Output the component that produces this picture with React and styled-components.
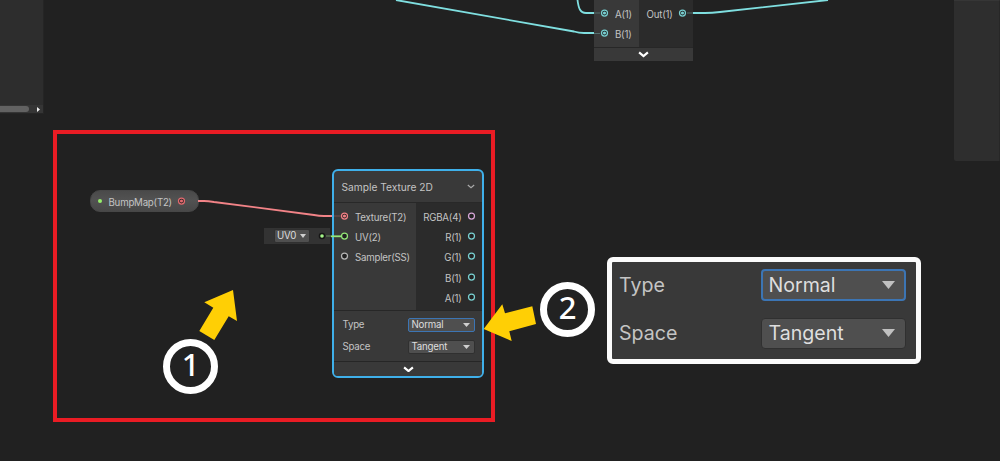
import React from 'react';
import styled, { createGlobalStyle } from 'styled-components';

const Global = createGlobalStyle`
  body { margin: 0; background: #212121; }
  * { box-sizing: border-box; }
`;

const Canvas = styled.main`
  position: relative;
  width: 1000px;
  height: 461px;
  overflow: hidden;
  background: #212121;
  color: #c4c4c4;
  font: 9.7px/20px Inter, sans-serif;
  letter-spacing: -0.22px;
  white-space: nowrap;
`;

const Placed = styled.div`
  position: absolute;
  left: ${p => p.$x}px;
  top: ${p => p.$y}px;
`;

const Overlay = styled.svg`
  position: absolute;
  inset: 0;
  pointer-events: none;
`;

const Blackboard = styled(Placed)`
  display: flex;
  flex-direction: column;
  justify-content: flex-end;
  width: 44px;
  height: 114px;
  background: #2d2d2d;
  border: solid #252525;
  border-width: 0 1px 1px 0;
`;

const ScrollBar = styled.div`
  display: flex;
  align-items: center;
  justify-content: space-between;
  height: 8px;
  padding-right: 3px;
  background: #353535;
`;

const Thumb = styled.div`
  width: 29px;
  height: 6px;
  border-radius: 0 3px 3px 0;
  background: #626262;
`;

const Inspector = styled(Placed)`
  width: 46px;
  height: 161px;
  background: #2e2e2e;
  border-top: 1px solid #363636;
  border-right: 1px solid #272727;
  border-radius: 0 0 0 2px;
`;

const Highlight = styled(Placed)`
  width: 442px;
  height: 292px;
  border: 4px solid #ea1c24;
`;

const Node = styled(Placed)`
  display: flex;
  flex-direction: column;
  width: ${p => p.$w}px;
  height: ${p => p.$h}px;
  background: #393939;
  ${p => p.$selected && 'border: 2px solid #3fb0ea; border-radius: 6px; overflow: hidden;'}
`;

const NodeHeader = styled.header`
  display: flex;
  align-items: center;
  justify-content: space-between;
  height: 32px;
  padding: 0 7px 0 7.5px;
  border-bottom: 1px solid #282828;
  font-size: 10.2px;
  letter-spacing: 0;
`;

const Ports = styled.div`
  display: flex;
  height: ${p => p.$h}px;
  border-bottom: 1px solid #272727;
`;

const Inputs = styled.div`
  width: ${p => p.$w}px;
  padding-top: ${p => p.$top}px;
`;

const Outputs = styled.div`
  flex: 1;
  padding-top: ${p => p.$top}px;
  background: #2b2b2b;
`;

const InputRow = styled.div`
  display: flex;
  height: 20.2px;
  padding-left: 5px;
  gap: 5px;
`;

const OutputRow = styled(InputRow)`
  justify-content: flex-end;
  padding: 0 ${p => p.$end ?? 5}px 0 0;
  gap: 4.5px;
`;

const Label = styled.span`
  padding-top: 2px;
`;

const Footer = styled.div`
  display: flex;
  flex: 1;
  align-items: center;
  justify-content: center;
  background: #393939;
`;

const Controls = styled.div`
  display: flex;
  flex-direction: column;
  gap: 8px;
  height: 51px;
  padding: 7px 7.5px 0 8.5px;
  border-bottom: 1px solid #262626;
`;

const Field = styled.div`
  display: flex;
  align-items: center;
  justify-content: space-between;
  height: 14px;
`;

const Select = styled.div`
  display: flex;
  align-items: center;
  justify-content: space-between;
  width: ${p => p.$w}px;
  height: ${p => p.$h}px;
  padding: 0 ${p => p.$pr}px 0 ${p => p.$pl}px;
  border: ${p => p.$bw ?? 1}px solid ${p => (p.$focus ? '#3c75b4' : '#303030')};
  border-radius: ${p => p.$r ?? 2}px;
  background: #4f4f4f;
  color: #dedede;
`;

const Property = styled(Placed)`
  display: flex;
  align-items: center;
  width: 109px;
  height: 22px;
  padding: 0 10.5px 0 7px;
  border-radius: 10px;
  background: linear-gradient(#4a4a4a, #525252 45%, #484848);
  border: 1px solid #474747;
`;

const Dot = styled.i`
  width: 4px;
  height: 4px;
  margin-right: 7px;
  border-radius: 50%;
  background: #97f06b;
`;

const PropertyName = styled.span`
  flex: 1;
  padding-top: 3px;
`;

const UvSlot = styled(Placed)`
  display: flex;
  align-items: center;
  justify-content: space-between;
  width: 66px;
  height: 16px;
  padding: 0 3px 0 10px;
  background: #333;
`;

const Callout = styled(Placed)`
  display: flex;
  flex-direction: column;
  gap: 16px;
  width: 314px;
  height: 107px;
  padding: 7px 10px 0 7px;
  border: 5px solid #fbfbfb;
  border-radius: 6px;
  background: #393939;
  font-size: 19.6px;
  line-height: 32px;
  letter-spacing: 0;
`;

const CalloutRow = styled.div`
  display: flex;
  align-items: center;
  justify-content: space-between;
  height: 32px;
`;

const Step = styled(Placed)`
  display: flex;
  align-items: center;
  justify-content: center;
  width: 55px;
  height: 55px;
  padding-bottom: 6px;
  border: 7px solid #fff;
  border-radius: 50%;
  background: #222;
  color: #fff;
  font: 500 31px/36px "Noto Sans", sans-serif;
`;

const Glyph = styled.svg`
  display: block;
  flex: none;
`;

const Port = ({ color, on }) => (
  <Glyph width="11" height="20" viewBox="0 0 11 20">
    <circle cx="5.5" cy="10" r="3" fill="#222" stroke={color} strokeWidth="1.25" />
    {on && <circle cx="5.5" cy="10" r="1.6" fill={color} />}
  </Glyph>
);

const Caret = ({ w = 7, h = 4, color = '#cfcfcf' }) => (
  <Glyph width={w} height={h} viewBox="0 0 10 6" preserveAspectRatio="none">
    <path d="M0 0H10L5 6Z" fill={color} />
  </Glyph>
);

const Chevron = ({ w, color, stroke }) => (
  <Glyph width={w} height={w * 0.6} viewBox="0 0 10 6">
    <path d="M1 1.3 5 4.6 9 1.3" fill="none" stroke={color} strokeWidth={stroke} />
  </Glyph>
);

const cyan = '#7fdfe0';
const aqua = '#78cfd0';

export default function App() {
  return (
    <Canvas>
      <Global />
      <Blackboard $x={0} $y={0}>
        <ScrollBar>
          <Thumb />
          <Glyph width="3" height="5" viewBox="0 0 3 5"><path d="M0 0 3 2.5 0 5Z" fill="#eee" /></Glyph>
        </ScrollBar>
      </Blackboard>
      <Inspector $x={954} $y={0} />

      <Node $x={594} $y={0} $w={99} $h={61}>
        <Ports $h={48}>
          <Inputs $w={44.5} $top={3}>
            <InputRow><Port color={aqua} on /><Label>A(1)</Label></InputRow>
            <InputRow><Port color={aqua} on /><Label>B(1)</Label></InputRow>
          </Inputs>
          <Outputs $top={3}>
            <OutputRow><Label>Out(1)</Label><Port color={aqua} on /></OutputRow>
          </Outputs>
        </Ports>
        <Footer><Chevron w={11} color="#fff" stroke={2} /></Footer>
      </Node>

      <Property $x={89.5} $y={190}>
        <Dot />
        <PropertyName>BumpMap(T2)</PropertyName>
        <Port color="#e36a6f" on />
      </Property>

      <UvSlot $x={264} $y={228}>
        <Select $w={36} $h={14} $pl={2} $pr={3}>UV0<Caret w={6} /></Select>
        <Glyph width="10" height="10" viewBox="0 0 10 10">
          <circle cx="5" cy="5" r="3.3" fill="#161616" />
          <circle cx="5" cy="5" r="1.8" fill="#a5f58a" />
        </Glyph>
      </UvSlot>

      <Node $x={332} $y={169} $w={152} $h={209} $selected>
        <NodeHeader>
          Sample Texture 2D
          <Chevron w={8} color="#a9a9a9" stroke={1.5} />
        </NodeHeader>
        <Ports $h={108}>
          <Inputs $w={82} $top={3}>
            <InputRow><Port color="#f08085" on /><Label>Texture(T2)</Label></InputRow>
            <InputRow><Port color="#93e678" /><Label>UV(2)</Label></InputRow>
            <InputRow><Port color="#b5b5b5" /><Label>Sampler(SS)</Label></InputRow>
          </Inputs>
          <Outputs $top={3}>
            <OutputRow><Label>RGBA(4)</Label><Port color="#d5a5d5" /></OutputRow>
            {['R', 'G', 'B', 'A'].map(c => (
              <OutputRow key={c}><Label>{c}(1)</Label><Port color={aqua} /></OutputRow>
            ))}
          </Outputs>
        </Ports>
        <Controls>
          <Field>Type<Select $w={67} $h={14} $pl={3} $pr={4} $focus>Normal<Caret /></Select></Field>
          <Field>Space<Select $w={67} $h={14} $pl={3} $pr={4}>Tangent<Caret /></Select></Field>
        </Controls>
        <Footer><Chevron w={11} color="#fff" stroke={2} /></Footer>
      </Node>

      <Highlight $x={53} $y={130} />

      <Overlay width="1000" height="461" fill="none">
        <g stroke={cyan} strokeWidth="1.8">
          <path d="M396 0 574 31.5Q579 33 584 33H594" />
          <path d="M577.5 0C578.5 8 580 13 586 13H594" />
          <path d="M693 13H705Q712 13 720 12L828 0" />
        </g>
        <path d="M594 13H600M594 33.5H600M687 13H693" stroke="#55706f" />
        <path d="M198 201H204Q208 201 214 202L314 215Q319 216 324 216H332" stroke="#f28387" strokeWidth="1.8" />
        <path d="M334 216H341" stroke="#755052" />
        <path d="M326 236H331" stroke="#668c5d" />
        <path d="M331 236.3H341" stroke="#93e678" strokeWidth="1.8" />
        <g fill="#ffcf05">
          <path d="M233 290 237 321 228.7 316.3 214.3 340 199.3 331 213.3 307.7 204.3 302.3Z" />
          <path d="M483.7 329 502.3 304.3 505 313.3 532.3 306.3 536 324 509.3 331.3 511.7 341Z" />
        </g>
      </Overlay>

      <Step $x={163} $y={339}>1</Step>
      <Step $x={540} $y={282}>2</Step>

      <Callout $x={607} $y={257}>
        <CalloutRow>
          Type
          <Select $w={145} $h={32} $pl={5.5} $pr={9} $bw={2} $r={4} $focus>Normal<Caret w={13} h={8} color="#c0c0c0" /></Select>
        </CalloutRow>
        <CalloutRow>
          Space
          <Select $w={145} $h={31} $pl={6.5} $pr={10} $r={4}>Tangent<Caret w={13} h={8} color="#c0c0c0" /></Select>
        </CalloutRow>
      </Callout>
    </Canvas>
  );
}
